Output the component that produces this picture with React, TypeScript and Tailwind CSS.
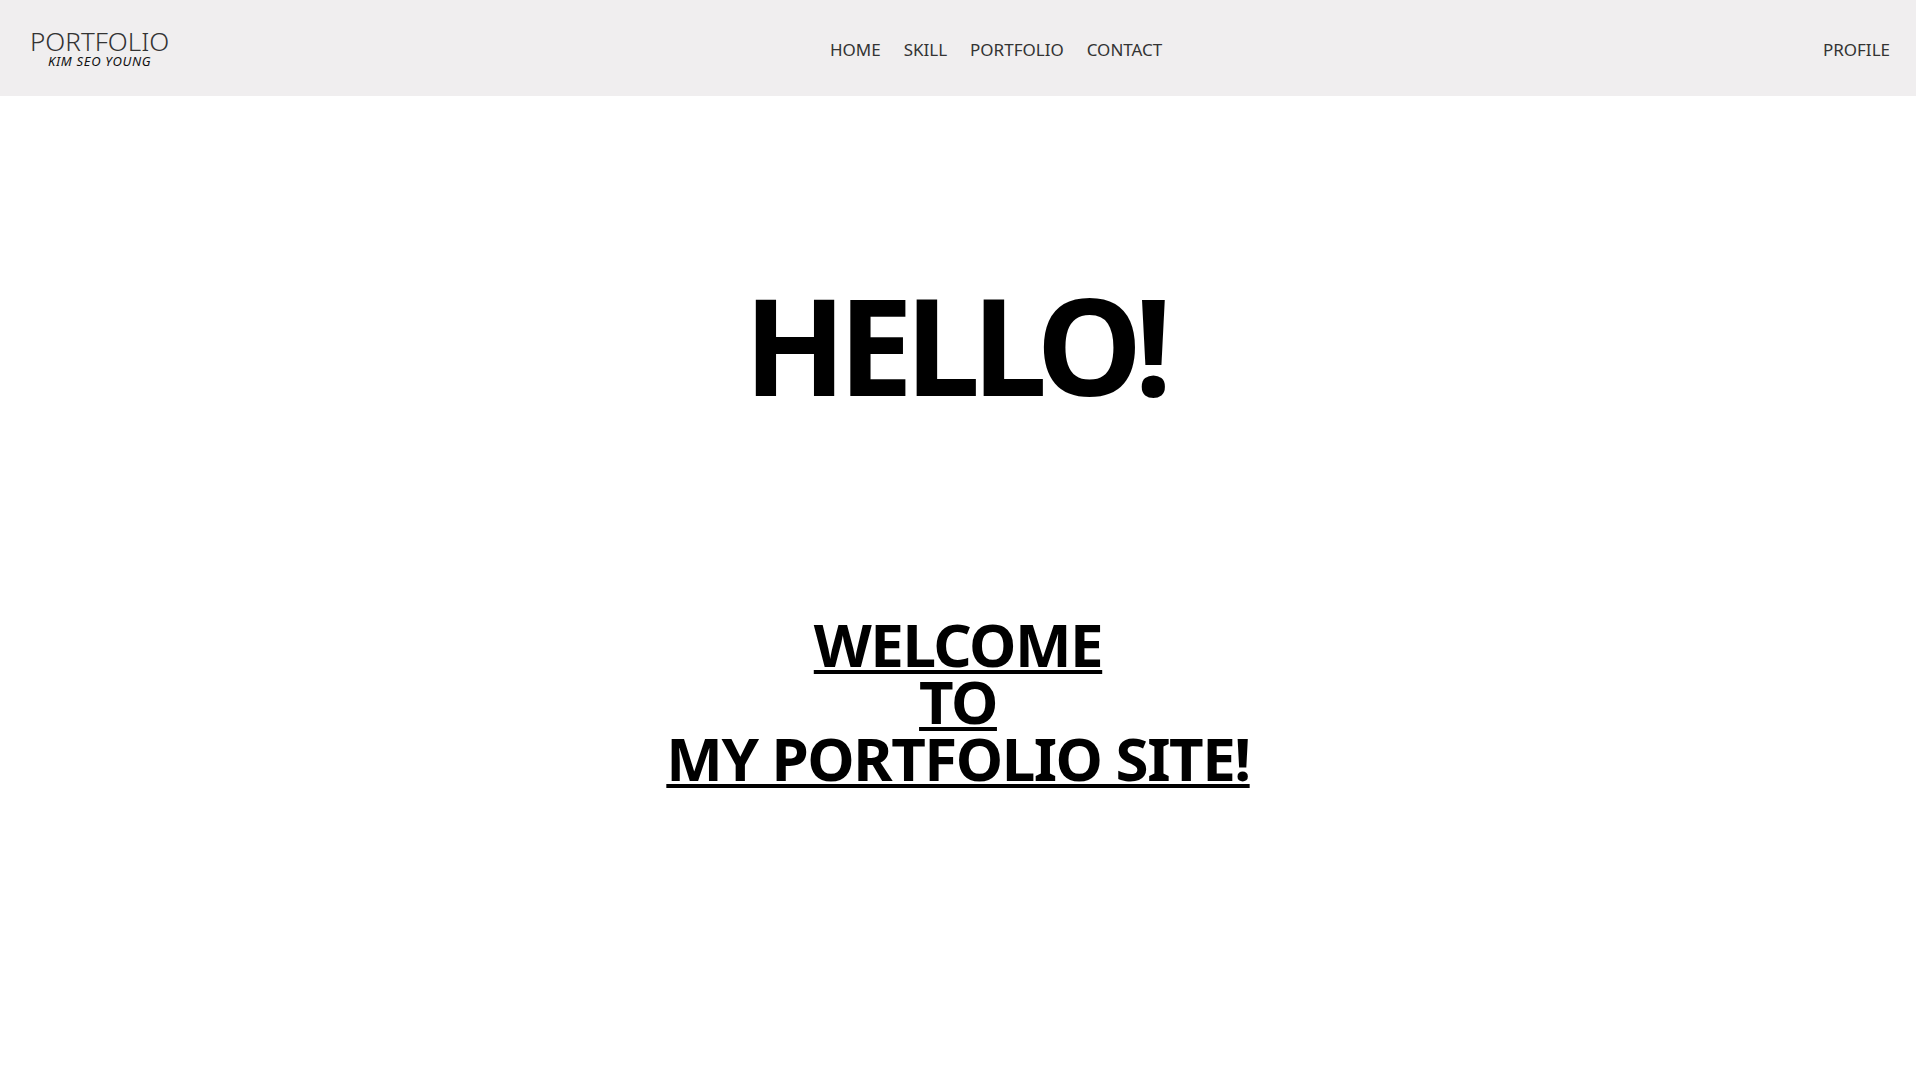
export default function App() {
  return (
    <div className="min-h-screen bg-white font-['Noto_Sans',sans-serif]">
      {/* Header */}
      <header className="flex h-[96px] items-center justify-between bg-[#f0eeef] pl-[30px] pr-[26px] text-[#333]">
        <a href="#" className="flex flex-col items-center">
          <span className="text-[26px] font-light leading-none">PORTFOLIO</span>
          <span className="mt-[1px] text-[13px] italic leading-none tracking-[0.7px] text-[#111]">KIM SEO YOUNG</span>
        </a>

        <nav className="flex gap-[23px] pt-[2px] text-[17px] leading-none">
          <a href="#">HOME</a>
          <a href="#">SKILL</a>
          <a href="#">PORTFOLIO</a>
          <a href="#">CONTACT</a>
        </nav>

        <a href="#" className="pt-[2px] text-[17px] leading-none">PROFILE</a>
      </header>

      {/* Main */}
      <main className="flex flex-col items-center pt-[181px] text-black">
        <h1 className="pr-[8px] text-[134px] font-bold leading-none tracking-[-8px]">HELLO!</h1>
        <h2 className="mt-[205px] text-center text-[60px] font-bold leading-[57px] tracking-[-1.5px] underline decoration-[4px] underline-offset-[3px]">
          WELCOME
          <br />
          TO
          <br />
          MY PORTFOLIO SITE!
        </h2>
      </main>
    </div>
  );
}
